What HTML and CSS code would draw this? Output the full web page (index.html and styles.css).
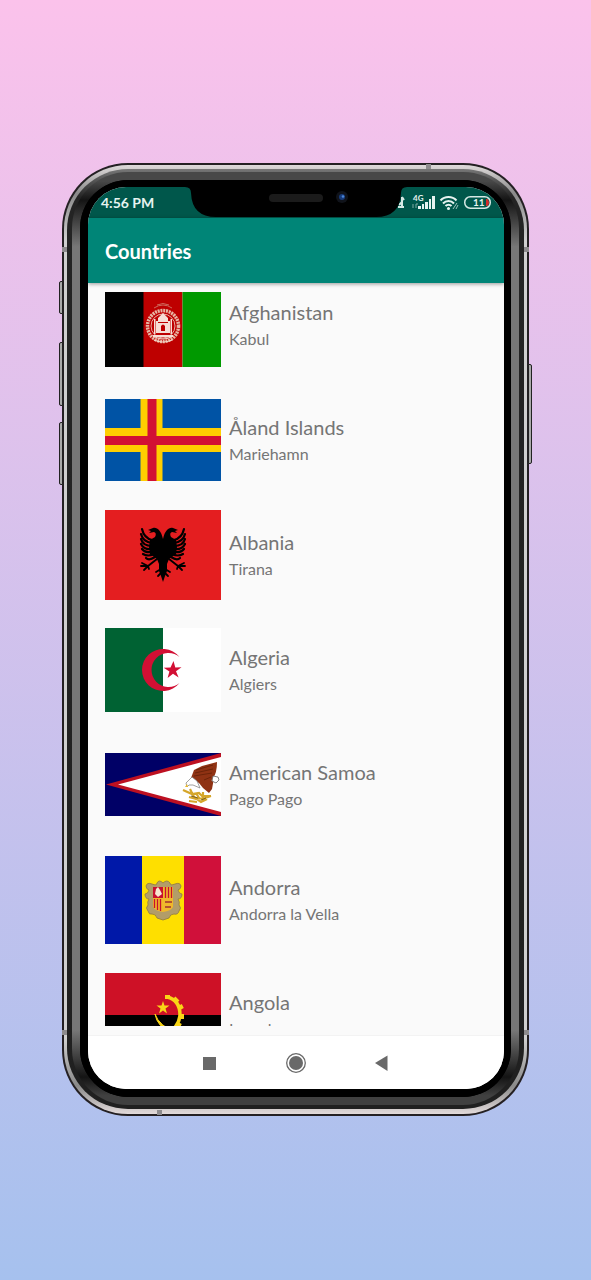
FILE: index.html
```html
<!DOCTYPE html>
<html lang="en">
<head>
<meta charset="utf-8">
<meta name="viewport" content="width=device-width, initial-scale=1">
<title>Countries</title>
<link rel="stylesheet" href="styles.css">
</head>
<body>
<div class="phone">
  <span class="side-key key-mute"></span>
  <span class="side-key key-up"></span>
  <span class="side-key key-down"></span>
  <span class="side-key key-power"></span>
  <span class="seam seam-top"></span>
  <span class="seam seam-left"></span>
  <span class="seam seam-right"></span>
  <span class="seam seam-low-left"></span>
  <span class="seam seam-low-right"></span>
  <span class="seam seam-bottom"></span>
  <div class="rail"><div class="band"><div class="bevel"><div class="glass">
    <div class="screen">
      <div class="status">
        <span class="clock">4:56 PM</span>
        <svg class="indicators" width="94" height="20" viewBox="0 0 94 20" aria-label="Signal, Wi-Fi, battery 11">
          <path d="M5 4v9M5 4l2 3M1 14h6M2 12l3-3" fill="none" stroke="#d5e8e4" stroke-width="2"/>
          <text x="16" y="8" class="net">4G</text>
          <path d="M16 11v4M19 11v4M19 11h2" fill="none" stroke="#7faaa3"/>
          <path d="M21 13h3v3h-3zM25 11h2v5h-2zM28 9h3v7h-3zM32 6h2v10h-2zM35 3h3v13h-3z" fill="#e6f3f0"/>
          <g fill="none" stroke="#e6f3f0" stroke-width="2">
            <path d="M43.500 7.500a11 11 0 0 1 16 0M46 10.500a7.500 7.500 0 0 1 11 0M48.500 13a4 4 0 0 1 6 0"/>
          </g>
          <circle cx="51.500" cy="15.500" r="1.500" fill="#e6f3f0"/>
          <path d="M56 16l4-6M59 16l2-4" stroke="#9cc4bd" fill="none"/>
          <rect x="67.750" y="3.750" width="25.500" height="11.500" rx="5.500" fill="none" stroke="#d5e8e4" stroke-width="1.500"/>
          <path d="M89 6h1.500q1.500 1.500 1.500 3.500t-1.500 3.500H89z" fill="#d62a2a"/>
          <text x="76" y="13" class="charge">11</text>
        </svg>
      </div>
      <svg class="notch" width="222" height="30" viewBox="0 0 222 30" aria-hidden="true">
        <path d="M0 0Q6 0 6 6Q7 30 31 30H191Q215 30 216 6Q216 0 222 0Z" fill="#000"/>
        <rect x="84" y="7" width="54" height="8" rx="4" fill="#1b1b1b"/>
        <circle cx="157" cy="10" r="6" fill="#10131a"/>
        <circle cx="157" cy="10" r="3" fill="#173a78"/>
        <circle cx="158" cy="9.500" r="1.300" fill="#4b86d8"/>
      </svg>
      <header class="appbar"><h1>Countries</h1></header>
      <main class="viewport">
        <ul class="list">
          <li class="row">
            <svg class="flag" viewBox="0 0 116 84" role="img" aria-label="Flag of Afghanistan">
              <path d="M0 0h39v84H0z"/><path d="M38.500 0h39v84h-39z" fill="#be0000"/><path d="M77.500 0H116v84H77.500z" fill="#009900"/>
              <g fill="none" stroke="#f2d5c8">
                <circle cx="58" cy="43" r="15.500" stroke="#e7b7a5" stroke-width="3.500" stroke-dasharray="2 .8"/>
                <circle cx="58" cy="43" r="12" stroke-width=".8"/>
                <path d="M49 25q9-6 18 0M52 22q6-3 12 0" stroke="#cf6a5c"/>
                <path d="M50 54q8 4 16 0M49 57q9 4 18 0" stroke-width="1.200"/>
              </g>
              <path d="M53 35l5-5 5 5v3h2v12H51V38h2z" fill="#f6dfd6"/>
              <path d="M56 43q2-3 4 0v5h-4zM53 39h10v1H53z" fill="#be0000"/>
              <path d="M48 52h20v2H48zM49 36h1.500v15H49zM65.500 36H67v15h-1.500z" fill="#f6dfd6"/>
            </svg>
            <div class="info"><h2>Afghanistan</h2><p>Kabul</p></div>
          </li>
          <li class="row">
            <svg class="flag" viewBox="0 0 116 82" role="img" aria-label="Flag of Åland Islands">
              <path d="M0 0h116v82H0z" fill="#0053a5"/><path d="M35.500 0h22v82h-22zM0 29h116v24H0z" fill="#ffce00"/><path d="M42.500 0h9v82h-9zM0 37h116v9H0z" fill="#d21034"/>
            </svg>
            <div class="info"><h2>Åland Islands</h2><p>Mariehamn</p></div>
          </li>
          <li class="row">
            <svg class="flag" viewBox="0 0 116 90" role="img" aria-label="Flag of Albania">
              <path d="M0 0h116v90H0z" fill="#e41e20"/>
              <g id="wing">
                <path d="M58 29C56 20 52 17 48 18L43 20 46 21 44 23 49 22Q52 23 50 27L45 30 44 37 45 44 52 49 54 54 54 61 56 66 58 72Z"/>
                <path d="M47 30Q39 28 37 19M47 33Q38 32 36 24M47 36Q38 36 36 29M47 39Q39 40 36 34M47 42Q40 43 37 39M49 44Q43 47 38 44M50 47Q44 51 41 48" fill="none" stroke="#000" stroke-width="2.200" stroke-linecap="round"/>
                <path d="M52 49L43 56H36M43 56L37 53M43 56L39 60M43 56l1 3M56 59l-5 3M57 62l-4 4" fill="none" stroke="#000" stroke-width="1.800" stroke-linecap="round"/>
              </g>
              <use href="#wing" transform="translate(116 0) scale(-1 1)"/>
            </svg>
            <div class="info"><h2>Albania</h2><p>Tirana</p></div>
          </li>
          <li class="row">
            <svg class="flag" viewBox="0 0 116 84" role="img" aria-label="Flag of Algeria">
              <path d="M0 0h58v84H0z" fill="#006233"/><path d="M58 0h58v84H58z" fill="#fff"/>
              <path d="M74.500 29A21 21 0 1 0 74.500 55A17 17 0 1 1 74.500 29ZM68.500 33l1.800 6.500 6.200-.3-5.500 4 2.600 6.300-5.600-3.700-5.400 4.300 1.800-6.600-5.700-3.800 6.800-.3z" fill="#d21034"/>
            </svg>
            <div class="info"><h2>Algeria</h2><p>Algiers</p></div>
          </li>
          <li class="row">
            <svg class="flag" viewBox="0 0 116 63" role="img" aria-label="Flag of American Samoa">
              <path d="M0 0h116v63H0z" fill="#006"/><path d="M116 0L1 31.500 116 63z" fill="#bd1021"/><path d="M116 4L13 31.500 116 59z" fill="#fff"/>
              <path d="M86 25L89 17 97 13 112 9Q112 20 108 25L106 28 109 25 107 36 104 40 98 35 94 30Z" fill="#8f3213"/>
              <path d="M91 17L108 12M90 20L108 16M89 23L107 20M99 27L106 24" stroke="#622006" fill="none" stroke-width=".8"/>
              <path d="M87 24L92 28 95 35 88 32 84 32 82 34 81 30Z" fill="#fff" stroke="#777" stroke-width=".7"/>
              <path d="M82 31l-2 3 3 0z" fill="#e9b827"/>
              <path d="M108 23l5 1 1 3-3 3-4-2z" fill="#fff" stroke="#666" stroke-width=".8"/>
              <path d="M78 37l9 4 7-1 3 3 9 0M84 44l7 2 9-1 6-2M85 36l4 8 7 5 6-3M91 40l3 5M98 39l0 10M84 48l8 1" fill="none" stroke="#d5a62a" stroke-width="2.200"/>
              <path d="M86 43l7 2M96 47l5-2" stroke="#79601f" fill="none"/>
            </svg>
            <div class="info"><h2>American Samoa</h2><p>Pago Pago</p></div>
          </li>
          <li class="row">
            <svg class="flag" viewBox="0 0 116 88" role="img" aria-label="Flag of Andorra">
              <path d="M0 0h38v88H0z" fill="#0018a8"/><path d="M37 0h42v88H37z" fill="#fedf00"/><path d="M79 0h37v88H79z" fill="#d0103a"/>
              <path d="M58 27q-4-4-6 0 0 3-5 1-5-2-6 2 0 3 3 4-1 4-4 4 0 5 4 5-2 3-1 6-3 3 0 6 1 4 4 3 4 0 5 4 3 1 6 2 3-1 6-2 1-4 5-4 4 1 5-3 3-3 0-6 1-3-1-6 4 0 4-5-3 0-4-4 3-1 3-4-1-4-6-2-5 2-5-1-3-4-7 0z" fill="#b29d69" stroke="#8f7a43" stroke-width=".8"/>
              <path d="M48 31h20v20q-2 4-10 5-8-1-10-5z" fill="#f0b82b"/>
              <path d="M48 31h10v11H48z" fill="#c8102e"/><path d="M51 33l2-2 2 3 2 4-4 3-3-3z" fill="#f7e6d0"/>
              <path d="M60.500 31v11M63.500 31v11M66.500 31v11M49.500 43v9M52.500 43v11M55.500 43v12" stroke="#c8102e" stroke-width="1.300"/>
              <path d="M60 45h7v2h-7zM60 50h6v2h-6z" fill="#b5522e"/>
            </svg>
            <div class="info"><h2>Andorra</h2><p>Andorra la Vella</p></div>
          </li>
          <li class="row">
            <svg class="flag" viewBox="0 0 116 84" role="img" aria-label="Flag of Angola">
              <path d="M0 0h116v42H0z" fill="#ce1126"/><path d="M0 42h116v42H0z"/>
              <path d="M62 24Q75 27 75 42Q74 54 63 60" fill="none" stroke="#f9d616" stroke-width="3.500"/>
              <path d="M60 24h5M69 25l4 4M75 32l2 4M77 41v5M75 50l-2 4" fill="none" stroke="#f9d616" stroke-width="4"/>
              <path d="M50 41Q54 53 72 60L67 60Q52 54 50 41Z" fill="#f9d616" stroke="#f9d616"/>
              <path d="M58 28l1.500 4.500h5l-4 3 1.500 5-4-3-4 3 1.500-5-4-3h5z" fill="#f9d616"/>
            </svg>
            <div class="info"><h2>Angola</h2><p>Luanda</p></div>
          </li>
        </ul>
      </main>
      <nav class="navbar">
        <button type="button" aria-label="Recent apps"><svg width="22" height="22" viewBox="0 0 22 22"><path d="M4 5h13v13H4z" fill="#696969"/></svg></button>
        <button type="button" aria-label="Home"><svg width="22" height="22" viewBox="0 0 22 22"><circle cx="11" cy="11" r="9.300" fill="none" stroke="#696969" stroke-width="1.300"/><circle cx="11" cy="11" r="7" fill="#696969"/></svg></button>
        <button type="button" aria-label="Back"><svg width="22" height="22" viewBox="0 0 22 22"><path d="M16.500 3.500v15.500L4 11z" fill="#696969"/></svg></button>
      </nav>
    </div>
  </div></div></div></div>
</div>
</body>
</html>
```
FILE: styles.css
```css
* { box-sizing: border-box; }

body {
  margin: 0;
  height: 100vh;
  padding: 163px 62px 164px;
  display: flex;
  background: linear-gradient(#fbc2eb, #a6c1ee);
  font-family: Lato, "Open Sans", sans-serif;
  color: #757575;
}

/* Phone body, from the outer edge inwards */
.phone {
  position: relative;
  flex: 1;
  min-width: 0;
  display: flex;
  padding: 2px;
  border-radius: 66px;
  background: #242023;
}
.rail, .band, .bevel, .glass { flex: 1; min-width: 0; display: flex; }
.rail {
  padding: 4px 3px 5px;
  border-radius: 64px;
  background: linear-gradient(#dedada, #8a8a8a 3%, #cfcfcf 8%, #cfcfcf 92%, #8a8a8a 97%, #e2dada);
}
.band {
  padding: 3px 5px 4px;
  border-radius: 61px;
  background: linear-gradient(#777, #242424 3%, #202020);
}
.bevel {
  border: 8px solid transparent;
  border-radius: 56px;
  background:
    linear-gradient(#000, #000) padding-box,
    linear-gradient(#484848 1%, #141414 3%, #777 8%, #777 92%, #141414 97%, #404040 99%) border-box;
}
.glass {
  padding: 7px 7px 8px 8px;
  border-radius: 48px;
  background: #000;
}
.screen {
  position: relative;
  flex: 1;
  min-width: 0;
  display: flex;
  flex-direction: column;
  overflow: hidden;
  border-radius: 38px;
  background: #fafafa;
}

.side-key {
  position: absolute;
  left: -3px;
  width: 4px;
  border: 1px solid #222;
  border-radius: 2px 0 0 2px;
  background: #aaa;
}
.key-mute { top: 118px; height: 33px; }
.key-up { top: 179px; height: 64px; }
.key-down { top: 259px; height: 63px; }
.key-power { top: 201px; left: auto; right: -3px; height: 100px; border-radius: 0 2px 2px 0; }

.seam { position: absolute; width: 5px; height: 5px; background: #8d8b8d; }
.seam-top { top: 1px; left: 364px; }
.seam-left { top: 84px; left: 0; }
.seam-right { top: 84px; right: 0; }
.seam-low-left { bottom: 81px; left: 0; }
.seam-low-right { bottom: 81px; right: 0; }
.seam-bottom { bottom: 1px; left: 95px; }

.status {
  height: 31px;
  padding: 0 13px;
  display: flex;
  align-items: center;
  justify-content: space-between;
  background: #00574b;
}
.clock { font-size: 14px; line-height: 20px; font-weight: 700; color: #e6f3f0; }
.net { font-size: 8px; font-weight: 700; fill: #e6f3f0; }
.charge { font-size: 10px; font-weight: 700; fill: #e6f3f0; }
.notch { position: absolute; top: 0; left: 50%; transform: translateX(-50%); }

.appbar {
  position: relative;
  height: 65px;
  padding: 0 17px;
  display: flex;
  align-items: center;
  background: #008577;
  box-shadow: 0 1px 4px rgba(0, 0, 0, .4);
}
.appbar h1 { margin: 0; font-size: 20px; line-height: 28px; font-weight: 700; color: #fff; }

.viewport {
  flex: 1;
  min-height: 0;
  margin: 9px 17px;
  overflow: hidden;
}
/* The list rests slightly scrolled */
.list { margin: -25px 0 0; padding: 0; list-style: none; }
.row { height: 115px; display: flex; align-items: center; gap: 8px; }
.flag { flex: none; width: 116px; }
.info { min-width: 0; padding-top: 2px; }
.info h2 { margin: 0; font-size: 20px; line-height: 27px; font-weight: 400; }
.info p { margin: 0; font-size: 16px; line-height: 26px; }

.navbar {
  height: 54px;
  display: flex;
  align-items: center;
  justify-content: center;
  gap: 64px;
  background: #fff;
  border-top: 1px solid #f3f3f3;
}
.navbar button { display: flex; padding: 0; border: 0; background: none; }
```
